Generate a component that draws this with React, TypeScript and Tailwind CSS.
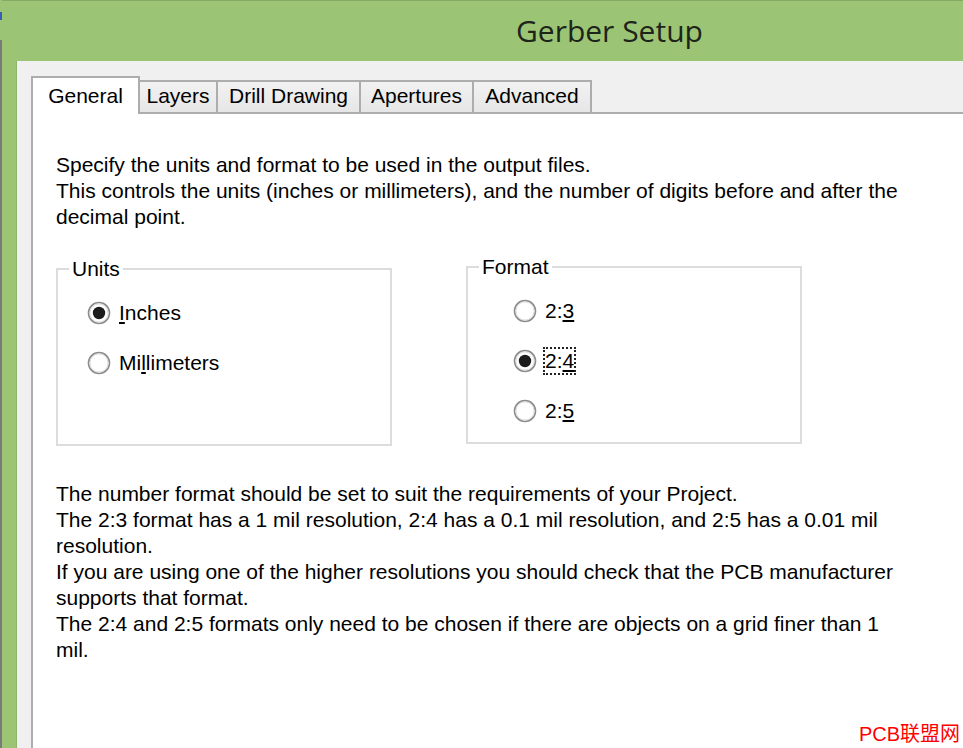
const tabs = [
  { label: 'Layers', w: 'w-[78px]' },
  { label: 'Drill Drawing', w: 'w-[143px]' },
  { label: 'Apertures', w: 'w-[113px]' },
  { label: 'Advanced', w: 'w-[118px]' },
]

function Radio({ checked }: { checked?: boolean }) {
  return (
    <svg width="24" height="24" viewBox="0 0 24 24" className="shrink-0">
      <circle cx="12" cy="12" r="10.5" fill="#fff" stroke="#8c8c8c" strokeWidth="1.6" />
      <circle cx="12" cy="12" r="9.2" fill="none" stroke="#d6d6d6" strokeWidth="1" />
      {checked && <circle cx="12" cy="12" r="6.2" fill="#1b1b1b" />}
    </svg>
  )
}

function Option({ checked, focus, children }: { checked?: boolean; focus?: boolean; children: React.ReactNode }) {
  return (
    <div className="flex items-center h-[26px] gap-[8px]">
      <Radio checked={checked} />
      <span
        className={
          focus
            ? 'border-2 border-dotted border-[#222] leading-[24px] -ml-[2px] px-0'
            : 'leading-[26px]'
        }
      >
        {children}
      </span>
    </div>
  )
}

export default function App() {
  return (
    <div className="relative w-[963px] h-[748px] overflow-hidden bg-[#9cc475] flex font-['Liberation_Sans',Arial,sans-serif] text-[21px] text-black">
      {/* window edge */}
      <div className="w-[2px] flex flex-col">
        <div className="h-[12px]" />
        <div className="h-[8px] bg-[#3b5fae]" />
        <div className="h-[20px]" />
        <div className="flex-1 bg-[#7a7a7a]" />
      </div>

      <div className="flex-1 flex flex-col">
        {/* title */}
        <div className="h-[61px] border-t border-[#86a866] pl-[514px] pt-[10px]">
          <span className="font-['Open_Sans',sans-serif] text-[30px] leading-[40px] text-[#1d241a]">
            Gerber Setup
          </span>
        </div>

        {/* dialog body */}
        <div className="flex-1 ml-[14px] bg-[#f0f0f0] border-l border-[#8eb36c] pt-[15px] pl-[14px] flex flex-col">
          <div className="flex items-end h-[36px] relative z-10">
            <div className="w-[109px] h-[38px] -mb-[2px] bg-white border-2 border-b-0 border-[#adadad] flex justify-center pt-[5px] leading-[26px]">
              General
            </div>
            {tabs.map((t) => (
              <div
                key={t.label}
                className={`${t.w} h-[32px] border-t-2 border-r-2 border-[#adadad] bg-gradient-to-b from-[#f2f2f2] to-[#e6e6e6] flex justify-center pt-[1px] leading-[26px] whitespace-nowrap`}
              >
                {t.label}
              </div>
            ))}
          </div>

          <div className="flex-1 bg-white border-t-2 border-l-2 border-[#adadad] pl-[23px] pt-[38px]">
            <p className="leading-[26px] whitespace-nowrap">
              Specify the units and format to be used in the output files.
              <br />
              This controls the units (inches or millimeters), and the number of digits before and after the
              <br />
              decimal point.
            </p>

            <div className="grid grid-cols-[336px_336px] gap-[74px] mt-[26px]">
              <fieldset className="border-2 border-[#dcdcdc] h-[190px]">
                <legend className="ml-[11px] px-[3px] leading-[26px]">Units</legend>
                <div className="flex flex-col gap-[24px] mt-[18px] pl-[29px]">
                  <Option checked>
                    <u className="underline-offset-2">I</u>nches
                  </Option>
                  <Option>
                    Mi<u className="underline-offset-2">l</u>limeters
                  </Option>
                </div>
              </fieldset>

              <fieldset className="border-2 border-[#dcdcdc] h-[190px] -mt-[2px]">
                <legend className="ml-[11px] px-[3px] leading-[26px]">Format</legend>
                <div className="flex flex-col gap-[24px] mt-[18px] pl-[45px]">
                  <Option>
                    2:<u className="underline-offset-2">3</u>
                  </Option>
                  <Option checked focus>
                    2:<u className="underline-offset-2">4</u>
                  </Option>
                  <Option>
                    2:<u className="underline-offset-2">5</u>
                  </Option>
                </div>
              </fieldset>
            </div>

            <p className="leading-[26px] whitespace-nowrap mt-[35px]">
              The number format should be set to suit the requirements of your Project.
              <br />
              The 2:3 format has a 1 mil resolution, 2:4 has a 0.1 mil resolution, and 2:5 has a 0.01 mil
              <br />
              resolution.
              <br />
              If you are using one of the higher resolutions you should check that the PCB manufacturer
              <br />
              supports that format.
              <br />
              The 2:4 and 2:5 formats only need to be chosen if there are objects on a grid finer than 1
              <br />
              mil.
            </p>
          </div>
        </div>
      </div>

      {/* watermark */}
      <span className="absolute right-[3px] bottom-[2px] text-[20px] leading-[24px] text-[#ff0000] font-['Liberation_Sans','Noto_Sans_CJK_SC',sans-serif]">
        PCB联盟网
      </span>
    </div>
  )
}
